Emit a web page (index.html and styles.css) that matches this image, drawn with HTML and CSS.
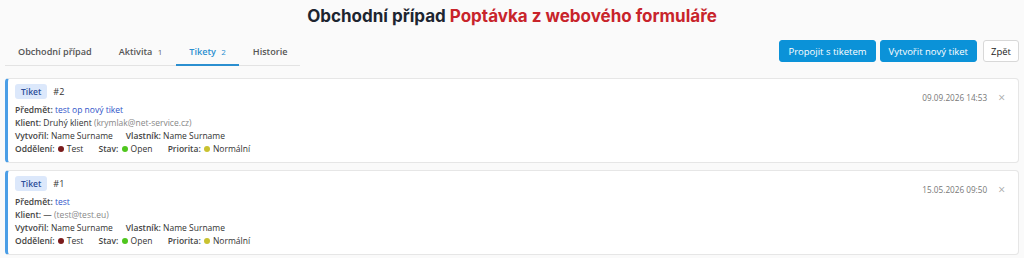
FILE: index.html
```html
<!DOCTYPE html>
<html lang="cs">
<head>
  <meta charset="UTF-8" />
  <meta name="viewport" content="width=device-width, initial-scale=1.0" />
  <title>Obchodní případ</title>
  <link rel="stylesheet" href="styles.css">
</head>
<body>
  <h1 class="title">Obchodní případ <span class="title-red">Poptávka z webového formuláře</span></h1>

  <div class="toolbar">
    <div class="tabs">
      <div class="tab">Obchodní případ</div>
      <div class="tab">Aktivita <span class="count">1</span></div>
      <div class="tab active">Tikety <span class="count">2</span></div>
      <div class="tab">Historie</div>
    </div>
    <div class="actions">
      <button class="btn btn-primary">Propojit s tiketem</button>
      <button class="btn btn-primary">Vytvořit nový tiket</button>
      <button class="btn btn-light">Zpět</button>
    </div>
  </div>

  <div class="cards">
    <div class="card">
      <div class="card-head">
        <span class="badge">Tiket</span>
        <span class="num">#2</span>
        <span class="date">09.09.2026 14:53</span>
        <span class="close">&times;</span>
      </div>
      <div class="row"><b>Předmět:</b> <span class="link">test op nový tiket</span></div>
      <div class="row"><b>Klient:</b> Druhý klient <span class="muted">(krymlak@net-service.cz)</span></div>
      <div class="row"><span class="cell"><b>Vytvořil:</b> Name Surname</span><span class="cell"><b>Vlastník:</b> Name Surname</span></div>
      <div class="row">
        <span class="cell"><b>Oddělení:</b> <i class="dot dot-red"></i>Test</span>
        <span class="cell"><b>Stav:</b> <i class="dot dot-green"></i>Open</span>
        <span class="cell"><b>Priorita:</b> <i class="dot dot-yellow"></i>Normální</span>
      </div>
    </div>

    <div class="card">
      <div class="card-head">
        <span class="badge">Tiket</span>
        <span class="num">#1</span>
        <span class="date">15.05.2026 09:50</span>
        <span class="close">&times;</span>
      </div>
      <div class="row"><b>Předmět:</b> <span class="link">test</span></div>
      <div class="row"><b>Klient:</b> — <span class="muted">(test@test.eu)</span></div>
      <div class="row"><span class="cell"><b>Vytvořil:</b> Name Surname</span><span class="cell"><b>Vlastník:</b> Name Surname</span></div>
      <div class="row">
        <span class="cell"><b>Oddělení:</b> <i class="dot dot-red"></i>Test</span>
        <span class="cell"><b>Stav:</b> <i class="dot dot-green"></i>Open</span>
        <span class="cell"><b>Priorita:</b> <i class="dot dot-yellow"></i>Normální</span>
      </div>
    </div>
  </div>
</body>
</html>
```

FILE: styles.css
```css
* { box-sizing: border-box; }
body {
  font-family: "Open Sans", "Noto Sans", sans-serif;
  margin: 0;
  padding: 0 5px;
  background: #fafafa;
  color: #333;
}
.title {
  margin: 0;
  padding-top: 6px;
  height: 35px;
  text-align: center;
  font-family: Inter, "Noto Sans", sans-serif;
  font-size: 17px;
  font-weight: 700;
  color: #1d2530;
}
.title-red { color: #c8242b; }
.toolbar {
  display: flex;
  justify-content: space-between;
  align-items: flex-start;
  height: 43px;
}
.tabs {
  display: flex;
  width: 295px;
  border-bottom: 1px solid #e3e3e3;
  white-space: nowrap;
}
.tab {
  padding: 9px 13.5px 4px 13.5px;
  font-size: 9.1px;
  font-weight: 600;
  color: #555;
  line-height: 16px;
  border-bottom: 2px solid transparent;
  margin-bottom: -1px;
}
.tab:first-child { padding-left: 13px; }
.tab .count {
  font-size: 8px;
  font-weight: 400;
  margin-left: 3px;
  color: #666;
}
.tab.active {
  color: #2b8fd0;
  border-bottom-color: #2b8fd0;
}
.tab.active .count { color: #2b8fd0; }
.actions {
  display: flex;
  gap: 4px;
  margin-top: 5px;
}
.btn {
  font-family: "Open Sans", sans-serif;
  font-size: 9.5px;
  height: 22px;
  padding: 0 8px;
  border-radius: 3px;
  cursor: pointer;
}
.btn-primary {
  background: #0b92d8;
  color: #fff;
  border: 1px solid #0b92d8;
}
.btn-light {
  background: #fff;
  color: #222;
  border: 1px solid #d8d8d8;
  margin-left: 2px;
  padding: 0 7px;
}
.cards {
  display: flex;
  flex-direction: column;
  gap: 7px;
}
.card {
  background: #fff;
  border: 1px solid #e6e6e6;
  border-left: 3px solid #4b9ee6;
  border-radius: 4px;
  padding: 5px 10px 7px 7px;
  font-size: 8.5px;
  line-height: 13px;
}
.card-head {
  display: flex;
  align-items: center;
  height: 15px;
  margin-bottom: 4px;
}
.badge {
  background: #dce8fb;
  color: #2d4f9a;
  font-weight: 600;
  border-radius: 3px;
  padding: 0 6px;
  height: 15px;
  line-height: 15px;
  font-size: 8.5px;
}
.num {
  margin-left: 6px;
  font-size: 9px;
  color: #333;
}
.date {
  margin-left: auto;
  color: #777;
  font-size: 8.2px;
  margin-top: 12px;
}
.close {
  margin-left: 11px;
  margin-right: 3px;
  color: #aaa;
  font-size: 12px;
  margin-top: 12px;
}
.row b {
  font-weight: 600;
  color: #444;
}
.cell { margin-right: 13px; }
.link { color: #2f54c9; }
.muted { color: #888; }
.dot {
  display: inline-block;
  width: 6px;
  height: 6px;
  border-radius: 50%;
  margin: 0 3px 0 1px;
  vertical-align: 0;
}
.dot-red { background: #7a1c1c; }
.dot-green { background: #4fc61e; }
.dot-yellow { background: #c9c230; }
```
